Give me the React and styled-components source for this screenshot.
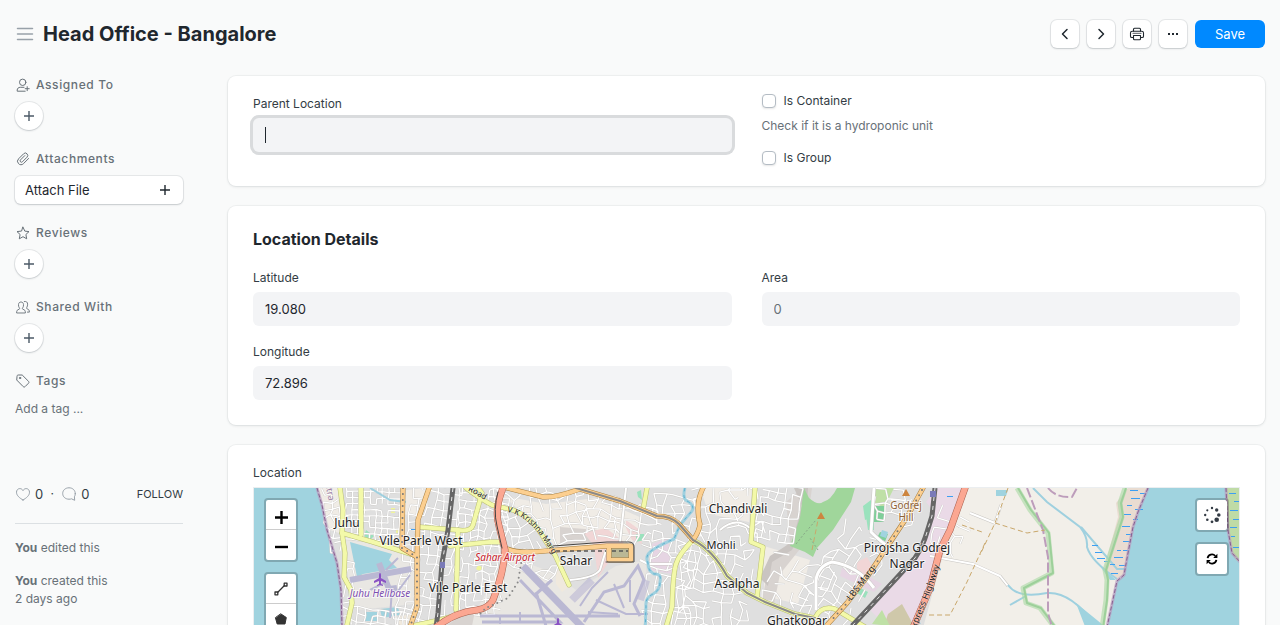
import { useState } from "react";
import styled, { createGlobalStyle } from "styled-components";

const GlobalStyle = createGlobalStyle`
    * {
        box-sizing: border-box;
    }

    body {
        margin: 0;
        background-color: #f9fafa;
        color: #1f272e;
        font-family: Inter, "Liberation Sans", sans-serif;
        font-size: 13px;
        line-height: 18px;
        -webkit-font-smoothing: antialiased;
    }

    button, input {
        font: inherit;
        color: inherit;
    }
`

/* ---------- icons ---------- */

const Icon = ({ size = 14, width = 1, box = 14, children }) => (
    <svg
        width={size}
        height={size}
        viewBox={`0 0 ${box} ${box}`}
        fill="none"
        stroke="currentColor"
        strokeWidth={width}
        strokeLinecap="round"
        strokeLinejoin="round"
        aria-hidden="true"
    >
        {children}
    </svg>
);

const MenuIcon = () => (
    <Icon size={18} box={18} width={1.5}>
        <path d="M1.5 3.5h15M1.5 9h15M1.5 14.5h15" />
    </Icon>
);

const LeftIcon = () => (
    <Icon size={16} box={16} width={1.5}><path d="M10 3.5 5.5 8l4.5 4.5" /></Icon>
);

const RightIcon = () => (
    <Icon size={16} box={16} width={1.5}><path d="M6 3.5 10.5 8 6 12.5" /></Icon>
);

const PrintIcon = () => (
    <Icon size={16} box={16} width={1.1}>
        <path d="M4.500 5V3.200c0-.6.4-1 1-1h5c.6 0 1 .4 1 1V5" />
        <path d="M4 11.500H2.800c-.7 0-1.300-.6-1.300-1.300V7c0-1.100.8-1.800 1.800-1.800h9.400c1 0 1.800.7 1.800 1.800v3.200c0 .7-.6 1.300-1.300 1.300H12" />
        <path d="M4.500 9.500h7v3.300c0 .6-.4 1-1 1h-5c-.6 0-1-.4-1-1z" />
        <path strokeOpacity=".6" d="M4 7.400h8" />
    </Icon>
);

const DotsIcon = () => (
    <Icon size={16} box={16} width={0}>
        <path fill="currentColor" d="M3 7h2v2H3zM7 7h2v2H7zM11 7h2v2h-2z" />
    </Icon>
);

const PlusIcon = () => (
    <Icon size={12} box={12} width={1.4}><path strokeLinecap="butt" d="M6 1v10M1 6h10" /></Icon>
);

const AssignIcon = () => (
    <Icon>
        <circle cx="6.700" cy="4.300" r="3.200" />
        <path d="M8 9.300H4.300C2.500 9.300 1.200 10.500 1.200 12v1.200h8M11.200 8.700v4M9.200 10.700h4" />
    </Icon>
);

const ClipIcon = () => (
    <Icon>
        <path d="m12.600 6.500-5.200 5.200a3.300 3.300 0 0 1-4.900-.1 3.400 3.400 0 0 1 .1-4.800l5-5a2.300 2.300 0 0 1 3.400 0 2.400 2.400 0 0 1 0 3.400l-4.600 4.600a1.300 1.300 0 0 1-1.900-1.900l4.300-4.300" />
    </Icon>
);

const StarIcon = () => (
    <Icon>
        <path d="m7 1.200 1.800 3.900 4.200.5-3.100 2.900.8 4.300L7 10.700l-3.700 2.100.8-4.300L1 5.600l4.200-.5z" />
    </Icon>
);

const ShareIcon = () => (
    <Icon width={0.9}>
        <path d="M.6 12.600c0-2.400.8-2.800 2.500-3.300.7-.3.600-.9.200-1.500-.7-1-.9-2-.8-3.200C2.600 2.900 3.600 2 5 2s2.400.9 2.500 2.600c.1 1.200-.1 2.200-.8 3.200-.4.6-.5 1.200.2 1.500 1.700.5 2.500.9 2.500 3.300z" />
        <path d="M8.300 1.500c2-.4 3.300.6 3.300 2.700 0 1.300-.2 2.200-.8 3.200-.4.600-.4 1.100.2 1.400 1.600.5 2.400 1.200 2.400 3.300h-2" />
    </Icon>
);

const TagIcon = () => (
    <Icon>
        <path d="M1 2.200C1 1.500 1.500 1 2.200 1h4l6.300 6.300c.6.6.6 1.300 0 1.900l-3.400 3.400c-.6.6-1.300.6-1.900 0L1 6.300z" />
        <circle cx="4" cy="4" r=".7" />
    </Icon>
);

const HeartIcon = () => (
    <Icon size={16} box={16}>
        <path d="M8 14C4.500 12 1.500 9.500 1.500 6.200c0-2 1.400-3.600 3.300-3.600 1.400 0 2.500.7 3.200 2 .7-1.300 1.800-2 3.200-2 1.900 0 3.300 1.600 3.300 3.600C14.500 9.500 11.500 12 8 14z" />
    </Icon>
);

const CommentIcon = () => (
    <Icon size={16} box={16}>
        <path d="M14.300 7.500c0-3.200-2.600-5.700-6.300-5.700S1.700 4.300 1.700 7.500s2.600 5.700 6.300 5.700c.9 0 1.800-.1 2.500-.4l3.200 1.500-.3-3.500c.6-.9.900-2 .9-3.300z" />
    </Icon>
);

const ZoomInIcon = () => (
    <Icon size={20} box={20} width={2.4}>
        <path stroke="#000" strokeLinecap="butt" d="M10.500 6v13M4 12.500h13" />
    </Icon>
);

const ZoomOutIcon = () => (
    <Icon size={20} box={20} width={2.4}>
        <path stroke="#000" strokeLinecap="butt" d="M4 12h13" />
    </Icon>
);

const LineToolIcon = () => (
    <Icon width={1.3}>
        <path d="m3.800 10.200 6.400-6.400" />
        <rect x="1" y="10" width="2.800" height="2.800" />
        <rect x="10.200" y="1.200" width="2.800" height="2.800" />
    </Icon>
);

const PolygonIcon = () => (
    <Icon><path fill="currentColor" d="M7 2l5.300 3.500-1.300 6.500H3.200L1.500 6z" /></Icon>
);

const LocateIcon = () => (
    <Icon size={18} box={18} width={0}>
        <g fill="#333b44">
            <circle cx="9" cy="2" r="1.200" />
            <circle cx="13.700" cy="4" r="1.700" />
            <circle cx="15.800" cy="9" r="1.800" />
            <circle cx="13.700" cy="13.700" r="2.300" />
            <circle cx="9" cy="15.800" r="1.400" />
            <circle cx="4.300" cy="13.700" r="1.300" />
            <circle cx="2.200" cy="9" r="1.200" />
            <circle cx="4.300" cy="4.300" r="1.100" />
        </g>
    </Icon>
);

const RefreshIcon = () => (
    <Icon size={12} box={12} width={1.8}>
        <path stroke="#000" strokeLinecap="butt" d="M1.600 5.200A4.400 4.400 0 0 1 9.300 3M10.400 6.800A4.400 4.400 0 0 1 2.700 9" />
        <path strokeWidth="0" fill="#000" d="M11.400.7v4.200H7.200zM.6 11.300V7.100h4.200z" />
    </Icon>
);

/* ---------- map drawing ---------- */

// small seeded generator so the side streets come out the same every time
const seeded = (seed) => () => {
    seed = (seed * 16807) % 2147483647;
    return seed / 2147483647;
};

const streets = ({ x, y, w, h, cell, turn, seed, keep = 0.72, bend = 0.35 }) => {
    const rand = seeded(seed);
    const cols = Math.ceil(w / cell);
    const rows = Math.ceil(h / cell);
    const angle = (turn * Math.PI) / 180;
    const points = [];
    for (let r = 0; r <= rows; r++) {
        for (let c = 0; c <= cols; c++) {
            const px = c * cell - w / 2 + (rand() - 0.5) * cell * bend * 2;
            const py = r * cell - h / 2 + (rand() - 0.5) * cell * bend * 2;
            points.push([
                (x + w / 2 + px * Math.cos(angle) - py * Math.sin(angle)).toFixed(1),
                (y + h / 2 + px * Math.sin(angle) + py * Math.cos(angle)).toFixed(1),
            ]);
        }
    }
    let d = "";
    for (let r = 0; r <= rows; r++) {
        for (let c = 0; c <= cols; c++) {
            const i = r * (cols + 1) + c;
            if (c < cols && rand() < keep) d += `M${points[i]}L${points[i + 1]}`;
            if (r < rows && rand() < keep) d += `M${points[i]}L${points[i + cols + 1]}`;
        }
    }
    return d;
};

const streetAreas = [
    { x: 326, y: 488, w: 12, h: 60, cell: 7, turn: -4, seed: 11 },
    { x: 344, y: 560, w: 6, h: 70, cell: 7, turn: 3, seed: 13 },
    { x: 346, y: 486, w: 52, h: 50, cell: 6, turn: 2, seed: 23, bend: 0.12, keep: 0.8 },
    { x: 404, y: 484, w: 46, h: 144, cell: 8, turn: 8, seed: 31, bend: 0.2 },
    { x: 456, y: 488, w: 44, h: 120, cell: 7, turn: 4, seed: 47, bend: 0.25 },
    { x: 350, y: 610, w: 60, h: 24, cell: 7, turn: 8, seed: 53, bend: 0.2 },
    { x: 506, y: 484, w: 76, h: 60, cell: 9, turn: -12, seed: 61 },
    { x: 584, y: 500, w: 70, h: 40, cell: 8, turn: 15, seed: 71 },
    { x: 508, y: 556, w: 44, h: 16, cell: 8, turn: 20, seed: 73 },
    { x: 650, y: 496, w: 38, h: 130, cell: 9, turn: 6, seed: 79 },
    { x: 678, y: 546, w: 70, h: 90, cell: 9, turn: 4, seed: 83 },
    { x: 698, y: 484, w: 56, h: 58, cell: 9, turn: -8, seed: 97, keep: 0.6 },
    { x: 758, y: 484, w: 34, h: 56, cell: 8, turn: 10, seed: 101, bend: 0.15 },
    { x: 768, y: 560, w: 54, h: 50, cell: 10, turn: 18, seed: 103, keep: 0.6 },
    { x: 820, y: 528, w: 46, h: 90, cell: 10, turn: 32, seed: 107, keep: 0.6 },
    { x: 936, y: 512, w: 30, h: 40, cell: 10, turn: 24, seed: 109 },
    { x: 876, y: 488, w: 36, h: 30, cell: 9, turn: 6, seed: 113 },
];

const sideStreets = streetAreas.map(streets).join("");

const roads = {
    yellow: [
        "M340 488l3 22-1 23 3 20-1 24 7 13 1 13-5 22",
        "M361 488v47",
        "M342 533l31 9 44 14",
        "M420 527l37 3q14 2 16-5l9-32-4-5",
        "M450 546l40-4h10",
        "M458 530l-2 80",
        "M412 626l28-6 20-6",
        "M466 488q16 12 26 17l21 5q20 8 32 30l10 15 14 30",
        "M647 488l-4 22",
        "M693 540q-14 14-17 24t-4 43l-6 20",
        "M755 488l-4 54 12 5-6 50",
        "M693 540q20 10 34 36l20 17 18 9 30 12 20 4",
        "M815 618q6-13 20-9l30 18",
    ],
    orange: [
        "M429 488l-11 32-1 37v50l-7 20",
        "M403 488l-1 60 15 9",
        "M507 488l36 9q12 1 37-8l40 12 37 15q14 0 22 8l14 16",
        "M703 488q-5 10-5 20t2 16q-1 8-7 16",
        "M505 548q12 6 40 3l62-5h24v14h-22v-14",
        "M923 488l-16 29-20 30-20 30-20 26-20 22",
    ],
    red: [
        "M503 488q-9 22-4 38l6 24q-1 22-12 50-4 8-16 10-22 2-42 18",
        "M965 488l-15 42-10 20-10 38-17 40",
    ],
};

const rails = [
    "M453 488l-5 42-6 33-4 50-2 14",
    "M935 488l-3 28-5 16q-4 14-12 26l-22 24-26 28-15 16",
];

const river = "M685 488q-3 10 2 13 8 4 5 10l-12 14-6 14q-12 5-20 10-10 6-6 14 0 8 6 11 8-1 6 8 0 8-7 12-8 4-7 12l-1 30";
const coast = "M317 488l5 17 5 25 10 33 4 27 1 36";
const eastCoast = "M1148 488l-10 24-5 15-5 26-4 22-7 6-10 46";

const marshDashes = [
    [1130, 490, 8], [1140, 493, 6], [1131, 498, 9], [1127, 505, 5], [1135, 509, 8],
    [1124, 514, 7], [1133, 519, 5], [1122, 526, 8], [1126, 534, 6], [1123, 541, 8],
    [1117, 550, 4], [1123, 550, 6], [1114, 557, 9], [1110, 564, 5], [1119, 565, 6],
    [1111, 573, 7], [1092, 545, 6], [1095, 552, 7], [1097, 558, 8], [1104, 561, 6],
    [1229, 493, 7], [1234, 501, 5], [1230, 510, 8], [1233, 519, 6], [1230, 527, 7],
    [1231, 536, 4], [1233, 547, 6], [947, 496, 6], [411, 529, 5],
];

const dotRoads = [
    "M403 488l-1 60 15 9v50l-7 20",
    "M922 490l-15 27-20 30-20 30-20 26-16 18",
];

const labels = [
    { x: 347, y: 527, text: "Juhu" },
    { x: 421, y: 545, text: "Vile Parle West" },
    { x: 468, y: 592, text: "Vile Parle East" },
    { x: 576, y: 565, text: "Sahar" },
    { x: 738, y: 513, text: "Chandivali" },
    { x: 721, y: 549, text: "Mohli", size: 11 },
    { x: 737, y: 588, text: "Asalpha" },
    { x: 797, y: 625, text: "Ghatkopar" },
    { x: 907, y: 552, text: "Pirojsha Godrej" },
    { x: 907, y: 568, text: "Nagar" },
    { x: 906, y: 509, text: "Godrej", size: 10, color: "#8f6235" },
    { x: 906, y: 521, text: "Hill", size: 10, color: "#8f6235" },
    { x: 505, y: 561, text: "Sahar Airport", size: 10, color: "#c8202a", italic: true },
    { x: 380, y: 597, text: "Juhu Helibase", size: 10, color: "#7d4fb0", italic: true },
];

const plane = "M0-6q1 0 1 2v3l5 3v2l-5-2v3l2 1v1l-3-1-3 1v-1l2-1v-3l-5 2V2l5-3v-3q0-2 1-2z";

const MapDrawing = () => (
    <MapCanvas viewBox="254 488 985 400" preserveAspectRatio="xMinYMin slice" role="img" aria-label="Street map of Mumbai">
        <rect x="254" y="488" width="985" height="400" fill="#f2efe9" />
        <path fill="#dfdfdf" d="M317 488h650l-22 60-22 80v260H342V626L327 530z" />
        <path fill="#f0ece6" d="M318 488h20l4 46-12-4zM406 490l20-2-8 30-14-4zM504 496l42 8 50-6 46 20-10 25-76 4-30-30zM764 546l46 14-12 44-34-8zM700 488h52l-3 34-40-8z" />
        <path fill="#e9e7e3" d="M346 536l68 22v46l-58 6-8-30zM506 556l46 16 24 18 40-24 30-6 2 66v262H500l-70-200 40-66z" />
        <path fill="#f0e9dd" d="M556 566l14 20-8 6-6-8zM400 616l12-2-6 12h-8z" />
        <path fill="#d8d3d0" d="M476 606l-30 20h26zM560 527l50 4 0 10-50 4zM770 560l20-18-4-40 16-14h10l-8 56-24 30-6 30-12-4z" />
        <path fill="#c9c4c1" d="M770 556l22-14 10-36-8-18h14l-2 34-14 28-20 12-4 24-8-8z" />
        <path fill="#f1d6d6" d="M584 533l22-5 18 14-18 24-8 12-4-32zM626 520l14 10 2 14-10-4-6-12zM857 562l10-5 8 14-8 10-10-8z" />
        <path fill="#e6d5e3" d="M652 544l16-6 4 36-22-4zM842 568l26 8 14 8-8 8-34-16z" />
        <path fill="#eadae7" d="M926 502l8 10-20 46-36 36-10 14 20 20h28l14-40 14-48 20-58-14-12z" />
        <path fill="#cfc8aa" d="M888 614l14-10 12 22h-30z" />
        <path fill="#bfe0a6" d="M874 488h20l-10 20-10-6zM872 624l10-14 8 16z" />
        <path fill="#a0d69b" d="M804 488l5 10q9 8 14 4 8-2 14-14h18l-4 14-18 28-16 18-4 9-8-5-15-6 10-28z" />
        <path fill="#9ae2bd" d="M863 506l8-6 4 16-10 4zM866 516h8v14h-6zM636 534l8 0 0 6-8 2zM860 588l8 4-3 6-8-5zM366 530l8 6-4 4-6-4zM637 492l4-2 1 10-4-3z" />
        <path fill="#7fcf9a" d="M874 506h10v16h-10zM880 532l8 2-4 10-8-4z" />
        <path fill="#f0f59c" d="M391 508h4v5h-4zM357 571h5v5h-5zM478 565l6 3-3 4-5-3zM396 530h4v3h-4z" />
        <path fill="#a0d3df" d="M350 542l42 12-3 6 8 8-34 6-6 3zM366 612h12v9h-14zM380 609l18-2 2 8-18 3zM882 530l6 2-2 6-6-2z" />

        {/* sea and creek */}
        <path fill="#a0d3df" d={`${coast}v262h-88V488z`} />
        <path fill="#e9dcd1" d="M1128 488h20l-15 40-8 47-9 4-12-10 14-52-2-14z" />
        <path fill="#a0d3df" d={`${eastCoast}v262h132V488z`} />
        <path fill="#bfdba6" d="M1226 488l2 42 4 23 5 8h4v-73z" />

        {/* side streets */}
        <path fill="none" stroke="#c9c7c4" strokeWidth="2" d={sideStreets} />
        <path fill="none" stroke="#fff" strokeWidth="1.300" d={sideStreets} />
        <g fill="none" stroke="#c9c7c4" strokeWidth="4" strokeLinejoin="round">
            <path d="M874 488l-3 44q12 12 20 16M816 610l0-30q2-14 16-18 26 4 42 26" />
            <path stroke="#fff" strokeWidth="3" d="M874 488l-3 44q12 12 20 16M816 610l0-30q2-14 16-18 26 4 42 26" />
            <path strokeWidth="3" d="M970 513l25 10 6-18M930 556l43 8 27 12 8 10M626 488l-6 54M640 560l8 4h24M570 580q24-2 30-10l6-20M720 530q16-14 30-2" />
            <path stroke="#fff" strokeWidth="2" d="M970 513l25 10 6-18M930 556l43 8 27 12 8 10M626 488l-6 54M640 560l8 4h24M570 580q24-2 30-10l6-20M720 530q16-14 30-2" />
        </g>

        {/* runways */}
        <g fill="none" stroke="#bab8d3">
            <path strokeWidth="6" d="M350 580l61-11M379 563l10 26 8-1" />
            <path strokeWidth="2" d="M386 570l12-12M370 590l16-8M392 588l-2 30M410 575l-12 16" />
            <path strokeWidth="7" d="M523 566l60 62" />
            <path strokeWidth="3" d="M520 580l40 42h-78M536 592l10 34M552 580l-16 14M480 616l140 0M584 622l20-30 20-6 14-20 6 14-10 24 6 12" />
            <path strokeWidth="2" d="M580 606l12-18 16-16M596 600l30 14 22 0M614 584l10 24M588 612l30 2M630 580v22M520 622v-10M500 624v-8" />
            <path strokeWidth="8" strokeOpacity=".6" d="M572 600l20-20M646 580l-6 20" />
        </g>

        {/* water lines */}
        <g fill="none" stroke="#9fd0df">
            <path strokeWidth="3" d={river} />
            <path stroke="#5fb0cf" strokeDasharray="3 4" d={river} />
            <path strokeWidth="2" d="M370 488l20 12 16 2M1033 488l14 14 33 25q8 10 7 20 4 14 30 32M1081 527l36 42h8M1008 585q10 14 39 8 24-2 50 34M1010 605l16-9" />
            <path stroke="none" fill="#9fd3df" d="M1076 603l32 26h-22zM996 490h12l-2 6-10 0zM1100 566l16 14-6 0z" />
        </g>
        <path stroke="#3d9ff2" strokeWidth="1" fill="none" d={marshDashes.map(([x, y, w]) => `M${x} ${y + 0.5}h${w}`).join("")} />

        {/* paths and borders */}
        <g fill="none" strokeLinejoin="round">
            <path stroke="#a8d8a4" strokeOpacity=".6" strokeWidth="5" d="M1017 488l13 22 18 23 4 40-29 15 3 15 14 5 15 20M1125 488l-5 15 2 14-17 53 2 10-1 20-4 28" />
            <path stroke="#9dd09a" strokeWidth="2" d="M1018 488l13 22 18 23 4 40-29 15 3 15 14 5 15 20M1126 488l-5 15 2 14-17 53 2 10-1 20-4 28" />
            <path stroke="#bd9dbb" strokeWidth="2" strokeDasharray="10 3" d="M1027 488l16 42 5 27v56l4 14M1048 488q8 10 24 9l5-9" />
            <path stroke="#b89bbf" strokeWidth="3" strokeOpacity=".7" d={`${coast}M1148 488l-10 24-5 15-5 26-4 22-7 6-10 46M1226 488l2 42 4 23 8 9`} />
            <path stroke="#87608f" strokeDasharray="4 2" d={`${coast}M1148 488l-10 24-5 15-5 26-4 22-7 6-10 46M1226 488l2 42 4 23 8 9`} />
            <path stroke="#c9a76b" strokeDasharray="5 3" d="M962 525l20 7M985 543l-18 39-17 33h-23M1008 488l-13 35-15 32M995 523l32 10 18-3M812 550l6-30 4-6" />
            <path stroke="#86a886" strokeDasharray="2 2" d="M796 544l8-10 12-14M818 550l-8-12" />
        </g>

        {/* main roads */}
        <g fill="none" strokeLinejoin="round" strokeLinecap="round">
            {roads.yellow.map((d) => <path key={d} d={d} stroke="#b9bf72" strokeWidth="5" />)}
            {roads.yellow.map((d) => <path key={d} d={d} stroke="#f3f9a9" strokeWidth="4" />)}
            {rails.map((d) => <path key={d} d={d} stroke="#666" strokeWidth="5" strokeLinecap="butt" />)}
            {rails.map((d) => <path key={d} d={d} stroke="#e8e8e8" strokeDasharray="4 5" strokeLinecap="butt" />)}
            <path fill="#bab796" d="M607 546h24v14h-24z" />
            {roads.orange.map((d) => <path key={d} d={d} stroke="#a97f3f" strokeWidth="5" />)}
            {roads.orange.map((d) => <path key={d} d={d} stroke="#fccf90" strokeWidth="4" />)}
            {roads.red.map((d) => <path key={d} d={d} stroke="#a8604f" strokeWidth="7" />)}
            {roads.red.map((d) => <path key={d} d={d} stroke="#fba792" strokeWidth="6" />)}
            <path stroke="#8a8a8a" strokeWidth="2" d="M576 488l44 13 37 15q14 0 22 8l14 16q20 10 34 36l20 17 18 9 30 12 20 4" />
            {dotRoads.map((d) => <path key={d} d={d} stroke="#777" strokeWidth="2" strokeDasharray="0 6" />)}
            <path stroke="#888" strokeWidth="2" strokeDasharray="0 5" d="M522 558l-4 24-10 16-22 10-8 8" />
            <path stroke="#555" strokeWidth="1.500" strokeDasharray="4 3" strokeLinecap="butt" d="M556 551h50M612 551h16" />
            <path stroke="#444" strokeWidth="1" d="M553 546l54-4h22q5 0 5 5v15h-28M498 492q-5 18-1 34l5 22" />
        </g>
        <path fill="#7a7ab8" d="M440 562h5v6h-5zM930 491h6v6h-6z" />
        <path fill="#cd853f" d="M821 512l4 7h-8zM906 489l4 7h-8z" />
        <path fill="#8a52c4" transform="translate(380 579)" d={plane} />
        <path fill="#8a52c4" transform="translate(558 624)" d={plane} />

        {labels.map((label) => (
            <MapLabel
                key={label.text}
                x={label.x}
                y={label.y}
                $size={label.size}
                $color={label.color}
                $italic={label.italic}
            >
                {label.text}
            </MapLabel>
        ))}
        <g>
            <path id="krishna" fill="none" d="M507 512q26 4 49 49" />
            <path id="lbs" fill="none" d="M851 601l32-42" />
            <path id="express" fill="none" d="M916 628l14-34 18-54" />
            <path id="road" fill="none" d="M468 491q10 4 24 14" />
            <path id="state" fill="none" d="M325 484q4 14 6 34" />
            <RoadLabel><textPath href="#krishna">V K Krishna Marg</textPath></RoadLabel>
            <RoadLabel $size={9}><textPath href="#lbs">LBS Marg</textPath></RoadLabel>
            <RoadLabel $size={9}><textPath href="#express">xpress Highway</textPath></RoadLabel>
            <RoadLabel><textPath href="#road">Road</textPath></RoadLabel>
            <RoadLabel $color="#9a7aa2" $size={9}><textPath href="#state">htra</textPath></RoadLabel>
        </g>
    </MapCanvas>
);

/* ---------- page ---------- */

const SideSection = ({ icon, title, children }) => (
    <Section>
        <SectionTitle>{icon}{title}</SectionTitle>
        {children}
    </Section>
);

const Field = ({ id, label, focused, ...rest }) => (
    <FieldBlock>
        <Label htmlFor={id}>{label}</Label>
        <InputWrap>
            <Input id={id} type="text" $focused={focused} {...rest} />
            {focused && <Caret />}
        </InputWrap>
    </FieldBlock>
);

const Check = ({ id, label }) => {
    const [checked, setChecked] = useState(false);

    return (
        <CheckLabel htmlFor={id}>
            <Checkbox id={id} type="checkbox" checked={checked} onChange={() => setChecked(!checked)} />
            {label}
        </CheckLabel>
    )
};

const App = () => (
    <Page>
        <GlobalStyle />
        <Header>
            <MenuButton aria-label="Toggle sidebar"><MenuIcon /></MenuButton>
            <Title>Head Office - Bangalore</Title>
            <Actions>
                <IconButton aria-label="Previous"><LeftIcon /></IconButton>
                <IconButton aria-label="Next"><RightIcon /></IconButton>
                <IconButton aria-label="Print"><PrintIcon /></IconButton>
                <IconButton aria-label="Menu"><DotsIcon /></IconButton>
                <SaveButton>Save</SaveButton>
            </Actions>
        </Header>
        <Body>
            <Sidebar>
                <SideSection icon={<AssignIcon />} title="Assigned To">
                    <RoundButton aria-label="Assign"><PlusIcon /></RoundButton>
                </SideSection>
                <SideSection icon={<ClipIcon />} title="Attachments">
                    <AttachButton>Attach File<PlusIcon /></AttachButton>
                </SideSection>
                <SideSection icon={<StarIcon />} title="Reviews">
                    <RoundButton aria-label="Add review"><PlusIcon /></RoundButton>
                </SideSection>
                <SideSection icon={<ShareIcon />} title="Shared With">
                    <RoundButton aria-label="Share"><PlusIcon /></RoundButton>
                </SideSection>
                <SideSection icon={<TagIcon />} title="Tags">
                    <TagInput placeholder="Add a tag ..." aria-label="Add a tag" />
                </SideSection>
                <Stats>
                    <Stat aria-label="Likes"><HeartIcon />0</Stat>
                    <Dot>·</Dot>
                    <Stat aria-label="Comments"><CommentIcon />0</Stat>
                    <Follow>FOLLOW</Follow>
                </Stats>
                <Activity><b>You</b> edited this</Activity>
                <Activity><b>You</b> created this<br />2 days ago</Activity>
            </Sidebar>
            <Main>
                <Card>
                    <Columns>
                        <Field id="parent" label="Parent Location" focused />
                        <Checks>
                            <Check id="container" label="Is Container" />
                            <Help>Check if it is a hydroponic unit</Help>
                            <Check id="group" label="Is Group" />
                        </Checks>
                    </Columns>
                </Card>
                <Card>
                    <CardTitle>Location Details</CardTitle>
                    <Columns>
                        <FieldStack>
                            <Field id="latitude" label="Latitude" defaultValue="19.080" />
                            <Field id="longitude" label="Longitude" defaultValue="72.896" />
                        </FieldStack>
                        <Field id="area" label="Area" placeholder="0" />
                    </Columns>
                </Card>
                <Card>
                    <MapTitle>Location</MapTitle>
                    <MapFrame>
                        <MapDrawing />
                        <MapControls $side="left">
                            <ControlBar>
                                <ControlButton aria-label="Zoom in"><ZoomInIcon /></ControlButton>
                                <ControlButton aria-label="Zoom out"><ZoomOutIcon /></ControlButton>
                            </ControlBar>
                            <ControlBar>
                                <ControlButton aria-label="Draw a line"><LineToolIcon /></ControlButton>
                                <ControlButton aria-label="Draw a polygon"><PolygonIcon /></ControlButton>
                            </ControlBar>
                        </MapControls>
                        <MapControls $side="right">
                            <ControlBar>
                                <ControlButton aria-label="Locate me"><LocateIcon /></ControlButton>
                            </ControlBar>
                            <ControlBar>
                                <ControlButton aria-label="Refresh"><RefreshIcon /></ControlButton>
                            </ControlBar>
                        </MapControls>
                    </MapFrame>
                </Card>
            </Main>
        </Body>
    </Page>
);

const Page = styled.div`
    height: 100vh;
    overflow-y: auto;
    scrollbar-width: none;
`

const Header = styled.header`
    display: flex;
    align-items: center;
    height: 68px;
    padding: 0 15px;
`

const PlainButton = styled.button`
    display: flex;
    align-items: center;
    justify-content: center;
    padding: 0;
    border: none;
    background: none;
    cursor: pointer;
`

const MenuButton = styled(PlainButton)`
    width: 20px;
    height: 20px;
    margin-right: 8px;
    color: #98a1a9;
`

const Title = styled.h1`
    margin: 0;
    font-size: 20px;
    line-height: 28px;
    font-weight: 700;
`

const Actions = styled.div`
    display: flex;
    gap: 8px;
    margin-left: auto;
`

const raised = `
    background-color: #fff;
    box-shadow: 0 0 0 1px rgba(25, 39, 52, 0.08), 0 1px 2px rgba(25, 39, 52, 0.16);
`

const IconButton = styled(PlainButton)`
    width: 28px;
    height: 28px;
    border-radius: 6px;
    ${raised}
`

const SaveButton = styled(PlainButton)`
    width: 70px;
    height: 28px;
    border-radius: 6px;
    background-color: #0089ff;
    color: #fff;
`

const Body = styled.div`
    display: grid;
    grid-template-columns: 168px minmax(0, 1fr);
    gap: 45px;
    padding: 8px 15px 20px;
`

const Sidebar = styled.aside`
    color: #687178;
    font-size: 12px;
`

const Section = styled.section`
    height: 74px;
`

const SectionTitle = styled.h2`
    display: flex;
    align-items: center;
    gap: 6px;
    margin: 0 0 8px;
    padding-left: 1px;
    font-size: 12px;
    line-height: 18px;
    font-weight: 500;
    letter-spacing: 0.05em;
`

const RoundButton = styled(PlainButton)`
    width: 28px;
    height: 28px;
    border-radius: 50%;
    color: #4c5a67;
    ${raised}
`

const AttachButton = styled(PlainButton)`
    justify-content: space-between;
    width: 100%;
    height: 28px;
    padding: 0 12px 0 10px;
    border-radius: 6px;
    color: #1f272e;
    font-size: 13px;
    ${raised}
`

const TagInput = styled.input`
    width: 100%;
    height: 20px;
    padding: 0;
    border: none;
    outline: none;
    background: none;

    &::placeholder {
        color: #687178;
        opacity: 1;
    }
`

const Stats = styled.div`
    display: flex;
    align-items: center;
    gap: 4px;
    height: 78px;
    padding-top: 18px;
    margin-bottom: 15px;
    border-bottom: 1px solid #dce0e3;
    color: #333c44;
`

const Stat = styled(PlainButton)`
    gap: 4px;
    font-size: 13px;

    svg {
        color: #98a1a9;
    }
`

const Dot = styled.span`
    width: 10px;
    text-align: center;
`

const Follow = styled(PlainButton)`
    margin-left: auto;
    font-size: 11px;
`

const Activity = styled.p`
    margin: 0 0 15px;
    font-size: 12px;
`

const Main = styled.main`
    display: grid;
    gap: 20px;
`

const Card = styled.section`
    padding: 16px 25px 19px;
    border-radius: 8px;
    background-color: #fff;
    box-shadow: 0 0 0 1px rgba(25, 39, 52, 0.04), 0 1px 3px rgba(25, 39, 52, 0.1);
`

const CardTitle = styled.h2`
    margin: 0;
    padding: 5px 0 15px;
    font-size: 16px;
    line-height: 24px;
    font-weight: 700;
`

const Columns = styled.div`
    display: grid;
    grid-template-columns: 1fr 1fr;
    gap: 30px;
    align-items: start;
`

const FieldStack = styled.div`
    display: grid;
    gap: 8px;
`

const FieldBlock = styled.div`
    display: grid;
    gap: 5px;
    padding: 3px 0 6px;
`

const Label = styled.label`
    color: #333c44;
    font-size: 12px;
    line-height: 18px;
`

const InputWrap = styled.div`
    position: relative;
`

const Input = styled.input`
    display: block;
    width: 100%;
    height: 34px;
    padding: 0 12px;
    border: none;
    border-radius: 6px;
    outline: none;
    background-color: #f3f4f6;
    box-shadow: ${({ $focused }) => $focused ? "0 0 0 3px #d9dbdd" : "none"};

    &::placeholder {
        color: #687178;
        opacity: 1;
    }
`

const Caret = styled.span`
    position: absolute;
    top: 9px;
    left: 12px;
    width: 1px;
    height: 16px;
    background-color: #1f272e;
`

const Checks = styled.div`
    display: grid;
    gap: 7px;
`

const CheckLabel = styled.label`
    display: flex;
    align-items: center;
    gap: 8px;
    color: #333c44;
    font-size: 12px;
`

const Checkbox = styled.input`
    appearance: none;
    width: 14px;
    height: 14px;
    margin: 0;
    border: 1px solid #b4bcc4;
    border-radius: 4px;
    background-color: #fff;
    box-shadow: 0 1px 2px rgba(0, 0, 0, 0.1);

    &:checked {
        background-color: #0089ff;
    }
`

const Help = styled.p`
    margin: 0 0 7px;
    color: #687178;
    font-size: 12px;
`

const MapTitle = styled.div`
    padding: 3px 0 5px;
    color: #333c44;
    font-size: 12px;
`

const MapFrame = styled.div`
    position: relative;
    height: 402px;
    border: 1px solid #ebeef0;
`

const MapCanvas = styled.svg`
    display: block;
    width: 100%;
    height: 100%;
`

const MapLabel = styled.text`
    font-family: "Noto Sans", sans-serif;
    font-size: ${({ $size }) => $size || 12}px;
    font-style: ${({ $italic }) => $italic ? "italic" : "normal"};
    text-anchor: middle;
    fill: ${({ $color }) => $color || "#222"};
    stroke: rgba(255, 255, 255, 0.7);
    stroke-width: 2px;
    paint-order: stroke;
`

const RoadLabel = styled.text`
    font-family: "Noto Sans", sans-serif;
    font-size: ${({ $size }) => $size || 8}px;
    fill: ${({ $color }) => $color || "#222"};
    stroke: rgba(255, 255, 255, 0.4);
    stroke-width: 1px;
    paint-order: stroke;
`

const MapControls = styled.div`
    position: absolute;
    top: 10px;
    ${({ $side }) => $side}: 10px;
    display: grid;
    gap: 10px;
`

const ControlBar = styled.div`
    border: 2px solid rgba(0, 0, 0, 0.2);
    border-radius: 4px;
    background-color: #fff;
    background-clip: padding-box;
`

const ControlButton = styled(PlainButton)`
    width: 30px;
    height: 30px;
    color: #333;

    &:not(:last-child) {
        border-bottom: 1px solid #ccc;
    }
`

export default App;
